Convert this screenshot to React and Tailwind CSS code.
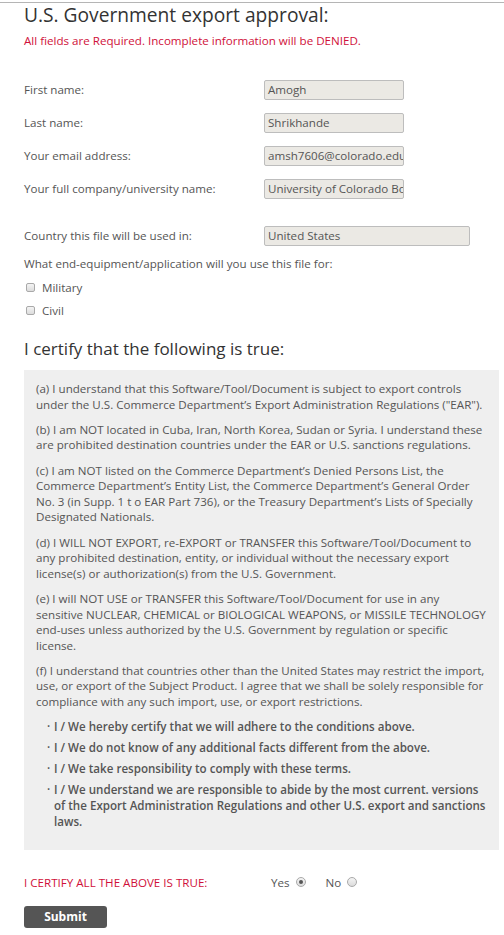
import { useState } from 'react';

const fields = [
  { label: 'First name:', value: 'Amogh' },
  { label: 'Last name:', value: 'Shrikhande' },
  { label: 'Your email address:', value: 'amsh7606@colorado.edu' },
  { label: 'Your full company/university name:', value: 'University of Colorado Boulder' },
];

const terms = [
  ['(a)', ' I understand that this Software/Tool/Document is subject to export controls under the U.S. Commerce Department\u2019s Export Administration Regulations ("EAR").'],
  ['(b)', ' I am NOT located in Cuba, Iran, North Korea, Sudan or Syria. I understand these are prohibited destination countries under the EAR or U.S. sanctions regulations.'],
  ['(c)', ' I am NOT listed on the Commerce Department\u2019s Denied Persons List, the Commerce Department\u2019s Entity List, the Commerce Department\u2019s General Order No. 3 (in Supp. 1 t o EAR Part 736), or the Treasury Department\u2019s Lists of Specially Designated Nationals.'],
  ['(d)', ' I WILL NOT EXPORT, re-EXPORT or TRANSFER this Software/Tool/Document to any prohibited destination, entity, or individual without the necessary export license(s) or authorization(s) from the U.S. Government.'],
  ['(e)', ' I will NOT USE or TRANSFER this Software/Tool/Document for use in any sensitive NUCLEAR, CHEMICAL or BIOLOGICAL WEAPONS, or MISSILE TECHNOLOGY end-uses unless authorized by the U.S. Government by regulation or specific license.'],
  ['(f)', ' I understand that countries other than the United States may restrict the import, use, or export of the Subject Product. I agree that we shall be solely responsible for compliance with any such import, use, or export restrictions.'],
];

const pledges = [
  'I / We hereby certify that we will adhere to the conditions above.',
  'I / We do not know of any additional facts different from the above.',
  'I / We take responsibility to comply with these terms.',
  'I / We understand we are responsible to abide by the most current. versions of the Export Administration Regulations and other U.S. export and sanctions laws.',
];

function Checkbox({ label }) {
  return (
    <label className="flex items-center h-[23px]">
      <span className="ml-[2px] w-[9px] h-[9px] rounded-[2px] border border-[#a9a9a9] bg-gradient-to-b from-[#f4f4f4] to-[#dcdcdc]" />
      <span className="ml-[7px] text-[#555]">{label}</span>
    </label>
  );
}

function Radio({ checked }) {
  return (
    <span className="inline-flex items-center justify-center w-[10px] h-[10px] rounded-full border border-[#a9a9a9] bg-gradient-to-b from-[#f4f4f4] to-[#dcdcdc]">
      {checked && <span className="w-[4px] h-[4px] rounded-full bg-[#555]" />}
    </span>
  );
}

export default function App() {
  const [certify] = useState('yes');

  return (
    <div className="min-h-[935px] bg-white border-t border-[#b5b5b5] mt-[2px] text-[11.6px] text-[#555] font-['Open_Sans',sans-serif]">
      <div className="pl-6 pr-[5px]">
        <h1 className="text-[19.2px] leading-[24px] text-[#333]">U.S. Government export approval:</h1>
        <p className="mt-[6px] text-[#d0103a] leading-[16px]">All fields are Required. Incomplete information will be DENIED.</p>

        {/* Contact fields */}
        <div className="mt-[31px] flex flex-col gap-[13px]">
          {fields.map(f => (
            <div key={f.label} className="flex items-center h-[20px]">
              <span className="w-[240px]">{f.label}</span>
              <div className="w-[140px] h-[20px] px-[3px] bg-[#ebe9e4] border border-[#bdbdbd] rounded-[2px] overflow-hidden whitespace-nowrap leading-[18px]">
                {f.value}
              </div>
            </div>
          ))}
        </div>

        <div className="mt-[27px] flex items-center h-[20px]">
          <span className="w-[240px]">Country this file will be used in:</span>
          <div className="w-[206px] h-[20px] px-[3px] bg-[#ebe9e4] border border-[#bdbdbd] rounded-[2px] leading-[18px]">
            United States
          </div>
        </div>

        <p className="mt-[10px] leading-[16px]">What end-equipment/application will you use this file for:</p>
        <div className="mt-[4px]">
          <Checkbox label="Military" />
          <Checkbox label="Civil" />
        </div>

        <h2 className="mt-[16px] text-[17px] leading-[22px] text-[#333]">I certify that the following is true:</h2>

        {/* Terms box */}
        <div className="mt-[10px] bg-[#efefef] pl-3 pr-3 pt-[11px] pb-[20px] leading-[15.6px]">
          {terms.map(([tag, text]) => (
            <p key={tag} className="mb-[9.6px]">
              <span>{tag}</span>{text}
            </p>
          ))}
          <ul className="mt-[6px] pl-[11px] flex flex-col gap-[5px] font-semibold leading-[16px]">
            {pledges.map(p => (
              <li key={p} className="flex">
                <span className="w-[7px] shrink-0">&middot;</span>
                <span>{p}</span>
              </li>
            ))}
          </ul>
        </div>

        {/* Certification */}
        <div className="mt-[24px] flex items-center h-[16px]">
          <span className="w-[247px] text-[#d0103a]">I CERTIFY ALL THE ABOVE IS TRUE:</span>
          <span className="mr-[6px]">Yes</span>
          <Radio checked={certify === 'yes'} />
          <span className="ml-[20px] mr-[6px]">No</span>
          <Radio checked={certify === 'no'} />
        </div>

        <button className="mt-[16px] w-[83px] h-[22px] rounded-[3px] bg-[#555] text-white font-bold text-[12px] leading-[22px]">
          Submit
        </button>
      </div>
    </div>
  );
}
